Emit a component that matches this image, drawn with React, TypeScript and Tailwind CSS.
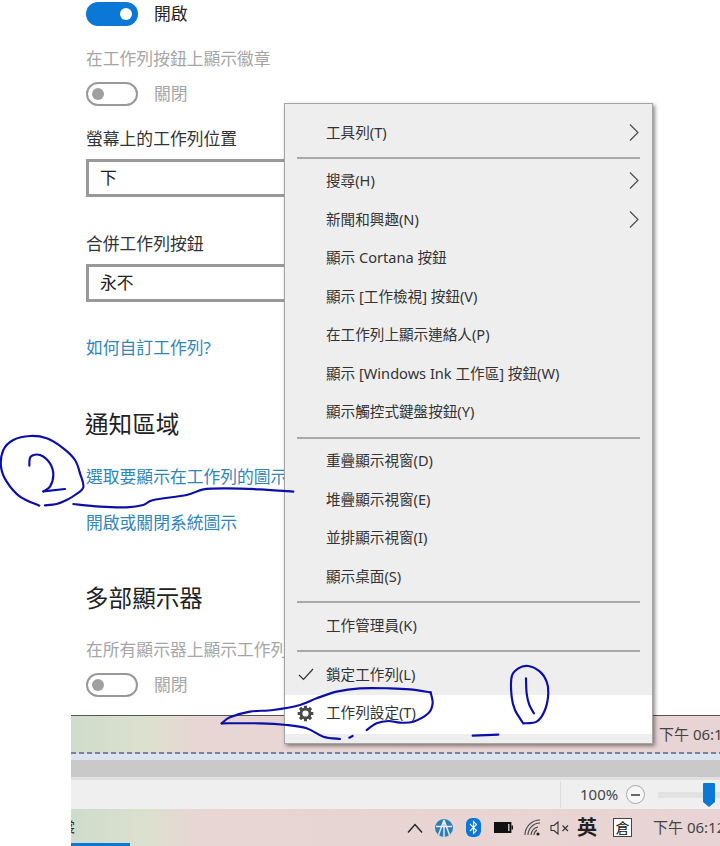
import React from "react";

type P = [number, number];
const smooth = (pts: P[]) => {
  const n = pts.length;
  const at = (i: number) => pts[Math.max(0, Math.min(n - 1, i))];
  let d = `M${pts[0][0]} ${pts[0][1]}`;
  for (let i = 0; i < n - 1; i++) {
    const [p0, p1, p2, p3] = [at(i - 1), at(i), at(i + 1), at(i + 2)];
    d += ` C${p1[0] + (p2[0] - p0[0]) / 6} ${p1[1] + (p2[1] - p0[1]) / 6} ${p2[0] - (p3[0] - p1[0]) / 6} ${p2[1] - (p3[1] - p1[1]) / 6} ${p2[0]} ${p2[1]}`;
  }
  return d;
};

const Toggle = ({ on }: { on?: boolean }) =>
  on ? (
    <div className="w-[52px] h-6 rounded-full bg-[#0a78d4] flex items-center justify-end pr-[6px] shrink-0">
      <div className="w-3 h-3 rounded-full bg-white" />
    </div>
  ) : (
    <div className="w-[52px] h-6 rounded-full border-2 border-[#999999] flex items-center pl-1 shrink-0">
      <div className="w-3 h-3 rounded-full bg-[#a0a0a0]" />
    </div>
  );

const Line = ({ className, children }: { className: string; children: React.ReactNode }) => (
  <div className={`whitespace-nowrap flex items-center ${className}`}>{children}</div>
);

const Select = ({ className, text }: { className: string; text: string }) => (
  <div className={`w-[320px] h-[38px] border-[3px] border-[#999999] flex items-center pl-[11px] text-[#222222] ${className}`}>
    {text}
  </div>
);

const Row = ({ text, chevron, check, gear, active, first }: { text: string; chevron?: boolean; check?: boolean; gear?: boolean; active?: boolean; first?: boolean }) => (
  <div className={`h-[38.5px] flex items-center relative pl-[41px] pr-[12px] text-[14.6px] text-[#333333] ${first ? "pb-0" : "pb-[2px]"} ${active ? "bg-white" : ""}`}>
    <span className="whitespace-nowrap">{text}</span>
    {chevron && (
      <svg className={`absolute left-[344px] ${first ? "top-[10px]" : "top-[9px]"}`} width="10" height="17" viewBox="0 0 10 17" fill="none" stroke="#444444" strokeWidth="1.1">
        <path d="M1 0.5 L9 8.5 L1 16.5" />
      </svg>
    )}
    {check && (
      <svg className="absolute left-[13px] top-[11px]" width="16" height="13" viewBox="0 0 16 13" fill="none" stroke="#333333" strokeWidth="1.2">
        <path d="M1 7 L5.5 11.5 L15 1" />
      </svg>
    )}
    {gear && (
      <svg className="absolute left-[12px] top-[10px]" width="17" height="17" viewBox="0 0 24 24" fill="none" stroke="#4a4a4a">
        <circle cx="12" cy="12" r="6.4" strokeWidth="4" />
        <path strokeWidth="4.4" d="M12 1V5M12 19V23M1 12H5M19 12H23M4.2 4.2L7 7M17 17L19.8 19.8M19.8 4.2L17 7M7 17L4.2 19.8" />
      </svg>
    )}
  </div>
);

const Sep = () => (
  <div className="h-[10.5px] flex items-center pl-[12px] pr-[12px]">
    <div className="w-full h-[2px] bg-[#a9a9a9]" />
  </div>
);

const Ink = () => (
  <svg className="absolute left-0 top-0 pointer-events-none" width="720" height="846" fill="none" stroke="#0b0fa8" strokeLinecap="round" strokeLinejoin="round">
    <g transform="translate(0 400) scale(0.3333)" strokeWidth="6.5">
      <path d={smooth([[118,317],[60,290],[20,245],[3,200],[10,150],[40,120],[90,108],[140,115],[190,145],[225,180],[240,220],[250,262],[225,285],[200,300],[170,312],[135,316]])} />
      <path d={smooth([[88,197],[92,170],[120,165],[150,190],[160,225],[150,260],[130,274]])} />
      <path d="M130 274 L195 267" />
      <path d={smooth([[220,312],[300,320],[380,322],[430,315],[460,300],[560,285],[610,268],[680,265],[780,268],[880,275]])} />
    </g>
    <g transform="translate(60 660) scale(0.3333)" strokeWidth="6.5">
      <path d={smooth([[840,237],[790,230],[740,205],[680,195],[600,190],[485,190]])} />
      <path d={smooth([[485,190],[510,172],[570,155],[640,150],[720,135],[770,115],[830,95],[900,85],[990,85],[1050,88],[1112,97]])} />
      <path d={smooth([[1112,97],[1118,130],[1105,160],[1060,185],[1020,188],[985,183],[950,190],[920,210]])} />
      <path d="M868 233 L878 228" />
    </g>
    <g transform="translate(390 660) scale(0.3333)" strokeWidth="6.5">
      <path d={smooth([[400,190],[375,150],[365,110],[365,50],[385,25],[415,18],[450,35],[470,65],[475,100],[465,150],[440,185],[400,190]])} />
      <path d={smooth([[408,55],[410,100],[418,135],[432,160]])} />
      <path d="M248 227 L325 224" />
    </g>
  </svg>
);

const Menu = () => (
  <div className="absolute left-[284px] top-[103px] w-[369px] h-[641px] bg-[#eeeeee] border border-[#a4a4a4] py-[10px] shadow-[2px_2px_4px_rgba(0,0,0,0.45)]">
    <Row text="工具列(T)" chevron first />
    <Sep />
    <Row text="搜尋(H)" chevron />
    <Row text="新聞和興趣(N)" chevron />
    <Row text="顯示 Cortana 按鈕" />
    <Row text="顯示 [工作檢視] 按鈕(V)" />
    <Row text="在工作列上顯示連絡人(P)" />
    <Row text="顯示 [Windows Ink 工作區] 按鈕(W)" />
    <Row text="顯示觸控式鍵盤按鈕(Y)" />
    <Sep />
    <Row text="重疊顯示視窗(D)" />
    <Row text="堆疊顯示視窗(E)" />
    <Row text="並排顯示視窗(I)" />
    <Row text="顯示桌面(S)" />
    <Sep />
    <Row text="工作管理員(K)" />
    <Sep />
    <Row text="鎖定工作列(L)" check />
    <Row text="工作列設定(T)" gear active />
  </div>
);

const Tray = () => (
  <div className="flex items-center h-full pl-[336px] text-[#333333]">
    <svg className="shrink-0" width="16" height="10" viewBox="0 0 16 10" fill="none" stroke="#222222" strokeWidth="1.4"><path d="M1 9.5 L8 1.5 L15 9.5" /></svg>
    <svg className="ml-[12px] shrink-0" width="18" height="18" viewBox="0 0 18 18">
      <circle cx="9" cy="9" r="9" fill="#2a7fb8" />
      <path d="M1 7.5 L17 7.5 M9 1 L3.5 16 M9 1 L14.5 16 M9 1 L9 18" stroke="#f4eaea" strokeWidth="1.4" fill="none" />
    </svg>
    <svg className="ml-[13px] shrink-0" width="15" height="19" viewBox="0 0 15 19">
      <rect width="15" height="19" rx="6" fill="#0a78d4" />
      <path d="M4 6 L10.5 12.5 L7.5 15.5 V3.5 L10.5 6.5 L4 13" fill="none" stroke="#ffffff" strokeWidth="1.1" />
    </svg>
    <svg className="ml-[13px] shrink-0" width="19" height="11" viewBox="0 0 19 11">
      <rect x="0.7" y="0.7" width="16" height="9.6" fill="#111111" stroke="#111111" strokeWidth="1.4" />
      <rect x="14" y="2" width="1.5" height="7" fill="#bbbbbb" />
      <rect x="17.5" y="3.5" width="1.5" height="4" fill="#111111" />
    </svg>
    <svg className="ml-[11px] shrink-0" width="17" height="17" viewBox="0 0 17 17" fill="none" stroke="#444444" strokeWidth="1.1">
      <path d="M1 16 A15 15 0 0 1 16 1 M4 16 A12 12 0 0 1 16 4 M7 16 A9 9 0 0 1 14 8 M10 16 A6 6 0 0 1 13 11" />
      <circle cx="14" cy="15" r="1.6" fill="#222222" stroke="none" />
    </svg>
    <svg className="ml-[9px] shrink-0" width="19" height="14" viewBox="0 0 19 14" fill="none" stroke="#333333" strokeWidth="1.1">
      <path d="M1 4.5 H4 L8 1 V13 L4 9.5 H1 Z" />
      <path d="M12.5 4.5 L18 10 M18 4.5 L12.5 10" />
    </svg>
    <span className="ml-[8px] w-[20px] text-[20px] font-bold leading-none text-[#222222] shrink-0">英</span>
    <div className="ml-[16px] w-[19px] h-[19px] shrink-0 border border-[#444444] bg-white flex items-center justify-center text-[14px] leading-none text-[#111111]">倉</div>
    <span className="ml-[21px] text-[15px] whitespace-nowrap text-[#444444]">下午 06:12</span>
  </div>
);

export default function App() {
  const pink = "bg-[linear-gradient(90deg,#cfdccb_0px,#dde0cf_80px,#e7d6d3_125px,#e8d4d4_100%)]";
  return (
    <div className="relative w-[720px] h-[846px] overflow-hidden bg-white text-[16.8px] font-['Noto_Sans','Noto_Sans_CJK_TC',sans-serif]">
      <div className="h-[715px] pl-[86px] flex flex-col">
        <Line className="mt-[2px] h-6 gap-4 text-[#222222]"><Toggle on /><span>開啟</span></Line>
        <Line className="mt-[21px] h-6 text-[#a6a6a6]">在工作列按鈕上顯示徽章</Line>
        <Line className="mt-[11px] h-6 gap-4 text-[#a6a6a6]"><Toggle /><span>關閉</span></Line>
        <Line className="mt-[21px] h-6 text-[#333333]">螢幕上的工作列位置</Line>
        <Select className="mt-2" text="下" />
        <Line className="mt-[35px] h-6 text-[#333333]">合併工作列按鈕</Line>
        <Select className="mt-2" text="永不" />
        <Line className="mt-[34px] h-6 text-[#2f86bb]">如何自訂工作列?</Line>
        <Line className="mt-[49px] h-8 -ml-px text-[23.6px] text-[#222222]">通知區域</Line>
        <Line className="mt-[24px] h-6 text-[#2f86bb]">選取要顯示在工作列的圖示</Line>
        <Line className="mt-[22px] h-6 text-[#2f86bb]">開啟或關閉系統圖示</Line>
        <Line className="mt-[48px] h-8 -ml-px text-[23.6px] text-[#222222]">多部顯示器</Line>
        <Line className="mt-[23px] h-6 text-[#a6a6a6]">在所有顯示器上顯示工作列</Line>
        <Line className="mt-[11px] h-6 gap-4 text-[#a6a6a6]"><Toggle /><span>關閉</span></Line>
      </div>

      <div className="ml-[71px] h-[131px] flex flex-col border-t border-[#555555]">
        <div className={`h-[36px] flex items-center justify-end ${pink}`}>
          <span className="text-[15px] text-[#444444] w-[61px] whitespace-nowrap overflow-hidden">下午 06:12</span>
        </div>
        <div className="h-[2px] bg-[repeating-linear-gradient(90deg,#6f86a8_0px,#6f86a8_5px,#e8d4d4_5px,#e8d4d4_8px)]" />
        <div className="h-[6px] bg-[#dbe5ef]" />
        <div className="h-[17px] bg-[#c9c9c9]" />
        <div className="h-[3px] bg-[#e0e0e0]" />
        <div className="h-[29px] bg-[#efefef] flex items-center">
          <div className="ml-[489px] w-px h-[27px] bg-[#dcdcdc]" />
          <span className="ml-[19px] text-[15px] text-[#444444]">100%</span>
          <div className="ml-[8px] w-[19px] h-[19px] rounded-full border border-[#aaaaaa] bg-[#f6f6f6] flex items-center justify-center shrink-0">
            <div className="w-[9px] h-[2px] bg-[#666666]" />
          </div>
          <div className="relative ml-[13px] flex-1 h-[6px] bg-[#e2e2e2]">
            <svg className="absolute left-[45px] -top-[9px]" width="12" height="24" viewBox="0 0 12 24"><path d="M0 1 Q0 0 1 0 H11 Q12 0 12 1 V19 L6 24 L0 19 Z" fill="#0a78d4" /></svg>
          </div>
        </div>
        <div className={`relative h-[37px] ${pink}`}>
          <div className="absolute left-0 top-[11px] w-[4px] overflow-hidden text-[14px] leading-none text-[#333333] flex justify-end"><span className="shrink-0">裳</span></div>
          <Tray />
          <div className="absolute left-0 bottom-0 w-[59px] h-[3px] bg-[#0a78d4]" />
        </div>
      </div>

      <Menu />
      <Ink />
    </div>
  );
}
